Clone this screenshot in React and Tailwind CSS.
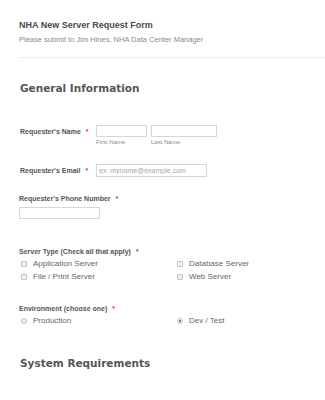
import React from "react";

const sans = { fontFamily: '"Liberation Sans", Arial, sans-serif' };
const heading = { fontFamily: '"DejaVu Sans", Verdana, sans-serif' };

function Star() {
  return <span className="text-[#e03c3c] ml-[5px]">*</span>;
}

function Box() {
  return (
    <span className="inline-block w-[6px] h-[6px] border border-[#c4c4c4] bg-[#efefef] rounded-[1px] shrink-0" />
  );
}

function Radio({ checked }) {
  return (
    <span className="flex items-center justify-center w-[6px] h-[6px] rounded-full border border-[#c4c4c4] bg-[#efefef] shrink-0">
      {checked && <span className="w-[2px] h-[2px] rounded-full bg-[#555]" />}
    </span>
  );
}

function Option({ children, radio, checked }) {
  return (
    <div className="flex items-center h-[13px] pl-[2px] gap-[6px] text-[8px] leading-[13px] text-[#666]">
      {radio ? <Radio checked={checked} /> : <Box />}
      <span>{children}</span>
    </div>
  );
}

export default function App() {
  return (
    <div className="w-[325px] h-[400px] overflow-hidden bg-white" style={sans}>
      <div className="pl-[19px]">
        <div className="pt-[21px] h-[30px] text-[9px] leading-[9px] font-bold text-[#4a4a4a]">
          NHA New Server Request Form
        </div>
        <div className="mt-[6px] h-[8px] text-[7.5px] leading-[8px] text-[#8a8a8a]">
          Please submit to Jim Hines, NHA Data Center Manager
        </div>
        <div className="mt-[13px] border-t border-[#ececec]" />

        <div
          className="mt-[25px] pl-[1px] h-[11px] text-[10.5px] leading-[11px] font-bold text-[#555]"
          style={heading}
        >
          General Information
        </div>

        <div className="mt-[31px] flex h-[20px]">
          <div className="w-[77px] pl-[1px] pt-[2.5px] text-[7px] leading-[7px] font-bold text-[#555]">
            Requester's Name<Star />
          </div>
          <div className="flex flex-col">
            <input className="w-[51px] h-[12px] border border-[#d6d6d6]" />
            <span className="mt-[1.5px] text-[6px] leading-[6px] text-[#8a8a8a]">First Name</span>
          </div>
          <div className="flex flex-col ml-[4px]">
            <input className="w-[66px] h-[12px] border border-[#d6d6d6]" />
            <span className="mt-[1.5px] text-[6px] leading-[6px] text-[#8a8a8a]">Last Name</span>
          </div>
        </div>

        <div className="mt-[19px] flex h-[13px]">
          <div className="w-[77px] pl-[1px] pt-[3px] text-[7px] leading-[7px] font-bold text-[#555]">
            Requester's Email<Star />
          </div>
          <input
            className="w-[111px] h-[13px] border border-[#d6d6d6] pl-[2px] text-[7px] placeholder:text-[#a8a8a8]"
            placeholder="ex: myname@example.com"
          />
        </div>

        <div className="mt-[18px] h-[7px] text-[7px] leading-[7px] font-bold text-[#555]">
          Requester's Phone Number<Star />
        </div>
        <input className="block mt-[5px] w-[81px] h-[12px] border border-[#d6d6d6]" />

        <div className="mt-[29px] h-[7px] text-[7px] leading-[7px] font-bold text-[#555]">
          Server Type (Check all that apply)<Star />
        </div>
        <div className="mt-[2px] grid grid-cols-[156px_1fr]">
          <Option>Application Server</Option>
          <Option>Database Server</Option>
          <Option>File / Print Server</Option>
          <Option>Web Server</Option>
        </div>

        <div className="mt-[22px] h-[7px] text-[7px] leading-[7px] font-bold text-[#555]">
          Environment (choose one)<Star />
        </div>
        <div className="mt-[2px] grid grid-cols-[156px_1fr]">
          <Option radio>Production</Option>
          <Option radio checked>Dev / Test</Option>
        </div>

        <div
          className="mt-[31px] pl-[1px] h-[11px] text-[10.5px] leading-[11px] font-bold text-[#555]"
          style={heading}
        >
          System Requirements
        </div>
      </div>
    </div>
  );
}
